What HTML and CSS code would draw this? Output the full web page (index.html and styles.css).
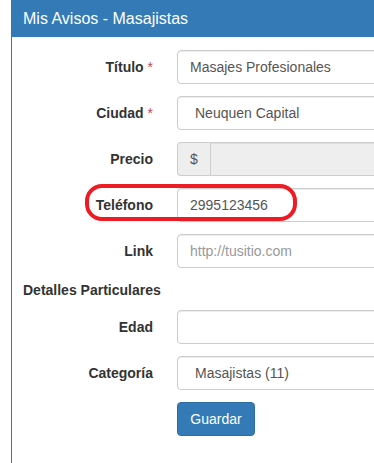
FILE: index.html
```html
<!DOCTYPE html>
<html lang="es">
<head>
    <meta charset="UTF-8">
    <meta name="viewport" content="width=device-width, initial-scale=1.0">
    <title>Mis Avisos - Masajistas</title>
    <link rel="stylesheet" href="styles.css">
</head>
<body>
    <div class="panel">
        <div class="panel-heading">Mis Avisos - Masajistas</div>
        <div class="panel-body">
            <form class="form-horizontal">
                <div class="form-group">
                    <label class="control-label">Título <span class="req">*</span></label>
                    <input type="text" class="form-control" value="Masajes Profesionales">
                </div>
                <div class="form-group">
                    <label class="control-label">Ciudad <span class="req">*</span></label>
                    <select class="form-control select">
                        <option>Neuquen Capital</option>
                    </select>
                </div>
                <div class="form-group">
                    <label class="control-label">Precio</label>
                    <div class="input-group">
                        <span class="input-addon">$</span>
                        <input type="text" class="form-control" readonly>
                    </div>
                </div>
                <div class="form-group highlight">
                    <label class="control-label">Teléfono</label>
                    <input type="text" class="form-control" value="2995123456">
                    <!-- red mark drawn over the row -->
                    <svg class="mark" width="212" height="37" viewBox="0 0 212 37">
                        <rect x="2" y="2" width="208" height="33" rx="15" ry="15" fill="none" stroke="#ed1c24" stroke-width="4"/>
                    </svg>
                </div>
                <div class="form-group">
                    <label class="control-label">Link</label>
                    <input type="text" class="form-control" placeholder="http://tusitio.com">
                </div>

                <h4 class="section-title">Detalles Particulares</h4>

                <div class="form-group">
                    <label class="control-label">Edad</label>
                    <input type="text" class="form-control">
                </div>
                <div class="form-group">
                    <label class="control-label">Categoría</label>
                    <select class="form-control select">
                        <option>Masajistas (11)</option>
                    </select>
                </div>
                <div class="form-actions">
                    <button type="button" class="btn-primary">Guardar</button>
                </div>
            </form>
        </div>
    </div>
</body>
</html>
```

FILE: styles.css
```css
html, body {
    margin: 0;
    background-color: #ffffff;
    overflow: hidden;
}

body {
    padding-left: 11px;
    font-family: "Liberation Sans", Arial, sans-serif;
    font-size: 14px;
    color: #333333;
}

.panel {
    width: 420px;
    height: 520px;
    border: 1px solid #337ab7;
    border-top: none;
    box-sizing: border-box;
}

.panel-heading {
    height: 37px;
    line-height: 37px;
    padding-left: 11px;
    background-color: #337ab7;
    color: #ffffff;
    font-size: 16px;
}

.panel-body {
    padding-top: 13px;
}

.form-group {
    display: flex;
    align-items: center;
    margin-bottom: 12px;
}

.highlight {
    position: relative;
}

.mark {
    position: absolute;
    left: 73px;
    top: -4px;
}

.control-label {
    width: 141px;
    margin-right: 24px;
    text-align: right;
    font-weight: bold;
    flex-shrink: 0;
}

.req {
    color: #b94a67;
    font-weight: normal;
}

.form-control {
    flex: 1;
    min-width: 0;
    height: 34px;
    padding: 6px 12px;
    box-sizing: border-box;
    font-family: inherit;
    font-size: 14px;
    color: #555555;
    background-color: #ffffff;
    border: 1px solid #cccccc;
    border-radius: 4px;
    box-shadow: inset 0 1px 1px rgba(0, 0, 0, 0.075);
    outline: none;
}

.form-control::placeholder {
    color: #999999;
}

.select {
    appearance: none;
    -webkit-appearance: none;
    padding-left: 17px;
}

.input-group {
    flex: 1;
    display: flex;
}

.input-addon {
    width: 33px;
    height: 34px;
    box-sizing: border-box;
    line-height: 32px;
    text-align: center;
    color: #555555;
    background-color: #eeeeee;
    border: 1px solid #cccccc;
    border-right: none;
    border-radius: 4px 0 0 4px;
}

.input-group .form-control {
    background-color: #eeeeee;
    border-radius: 0 4px 4px 0;
}

.section-title {
    margin: 12px 0 10px 11px;
    font-size: 14px;
    line-height: 20px;
    font-weight: bold;
}

.form-actions {
    padding-left: 165px;
}

.btn-primary {
    width: 78px;
    height: 34px;
    padding: 6px 12px;
    font-family: inherit;
    font-size: 14px;
    color: #ffffff;
    background-color: #337ab7;
    border: 1px solid #2e6da4;
    border-radius: 4px;
    cursor: pointer;
}
```
